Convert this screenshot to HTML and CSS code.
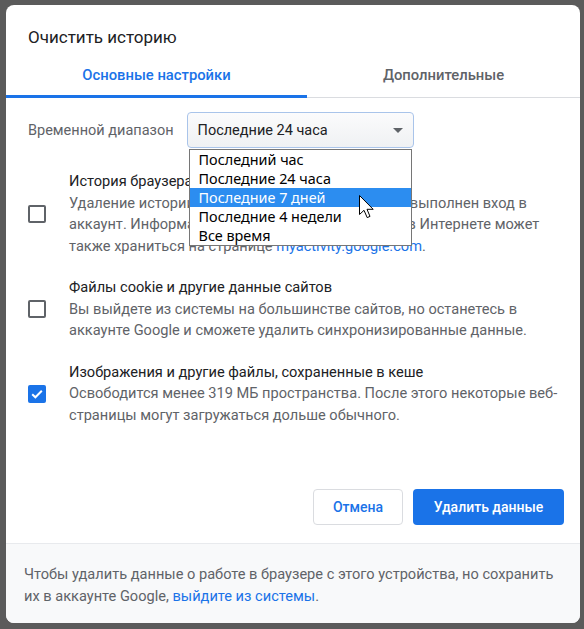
FILE: index.html
```html
<!DOCTYPE html>
<html lang="ru">
<head>
<meta charset="utf-8">
<title>Очистить историю</title>
<link rel="stylesheet" href="styles.css">
</head>
<body>
<div class="dialog">
  <div class="title">Очистить историю</div>
  <div class="tabs">
    <div class="tab active">Основные настройки</div>
    <div class="tab">Дополнительные</div>
  </div>
  <div class="body">
    <div class="range-row">
      <span class="range-label">Временной диапазон</span>
      <div class="select-wrap">
        <div class="select">Последние 24 часа<span class="arrow"></span></div>
        <ul class="dropdown">
          <li>Последний час</li>
          <li>Последние 24 часа</li>
          <li class="selected">Последние 7 дней</li>
          <li>Последние 4 недели</li>
          <li>Все время</li>
          <svg class="cursor" width="16" height="24" viewBox="0 0 16 24"><path d="M0.5 0.5 L0.5 19.5 L5 15.3 L8.2 22.6 L11 21.4 L8 14.3 L14.2 14.3 Z" fill="#fff" stroke="#000" stroke-width="1" stroke-linejoin="miter"/></svg>
        </ul>
      </div>
    </div>
    <div class="items">
      <div class="item">
        <span class="cb"></span>
        <div class="text">
          <div class="item-title">История браузера</div>
          <div class="item-desc">Удаление истории со всех устройств, на которых выполнен вход в аккаунт. Информация о других ваших действиях в Интернете может также храниться на странице <a class="link">myactivity.google.com</a>.</div>
        </div>
      </div>
      <div class="item">
        <span class="cb"></span>
        <div class="text">
          <div class="item-title">Файлы cookie и другие данные сайтов</div>
          <div class="item-desc">Вы выйдете из системы на большинстве сайтов, но останетесь в аккаунте Google и сможете удалить синхронизированные данные.</div>
        </div>
      </div>
      <div class="item">
        <span class="cb checked"><svg width="18" height="18" viewBox="0 0 18 18"><path d="M4.2 9.2 L7.4 12.3 L13.8 5.8" fill="none" stroke="#fff" stroke-width="2"/></svg></span>
        <div class="text">
          <div class="item-title">Изображения и другие файлы, сохраненные в кеше</div>
          <div class="item-desc">Освободится менее 319 МБ пространства. После этого некоторые веб-страницы могут загружаться дольше обычного.</div>
        </div>
      </div>
    </div>
    <div class="actions">
      <button class="btn btn-cancel">Отмена</button>
      <button class="btn btn-primary">Удалить данные</button>
    </div>
  </div>
  <div class="footer">Чтобы удалить данные о работе в браузере с этого устройства, но сохранить их в аккаунте Google, <a class="link">выйдите из системы</a>.</div>
</div>
</body>
</html>
```
FILE: styles.css
```css
html, body {
  margin: 0;
  padding: 0;
}
body {
  background: #5b5b5b;
  width: 584px;
  height: 629px;
  overflow: hidden;
  font-family: Roboto, "Liberation Sans", sans-serif;
}
.dialog {
  margin: 5px 0 0 6px;
  width: 574px;
  height: 618px;
  background: #fff;
  border-radius: 8px;
  display: flex;
  flex-direction: column;
  overflow: hidden;
}
.title {
  padding: 21px 22px 0;
  font-size: 17px;
  line-height: 22px;
  color: #202124;
}
.tabs {
  display: flex;
  border-bottom: 1px solid #dadce0;
}
.tab {
  height: 49px;
  box-sizing: border-box;
  padding-top: 5px;
  display: flex;
  align-items: center;
  justify-content: center;
  font-size: 14.8px;
  font-weight: 500;
  color: #5f6368;
  flex: 1;
}
.tab.active {
  flex: 0 0 301px;
  color: #1a73e8;
  border-bottom: 3px solid #1a73e8;
  margin-bottom: -1px;
  padding-top: 7px;
  height: 50px;
}
.body {
  flex: 1;
  display: flex;
  flex-direction: column;
  padding: 0 16px 0 22px;
}
.range-row {
  margin-top: 14px;
  display: flex;
  align-items: center;
  gap: 13px;
}
.range-label {
  font-size: 14.5px;
  color: #5f6368;
}
.select-wrap {
  position: relative;
}
.select {
  width: 227px;
  height: 36px;
  box-sizing: border-box;
  border: 1px solid #a9c4ea;
  border-radius: 4px;
  background: linear-gradient(#fbfbfc, #eff1f3);
  padding-left: 10px;
  display: flex;
  align-items: center;
  font-size: 14.5px;
  color: #202124;
  position: relative;
}
.arrow {
  position: absolute;
  right: 10px;
  top: 15px;
  width: 0;
  height: 0;
  border-left: 5px solid transparent;
  border-right: 5px solid transparent;
  border-top: 5px solid #5f6368;
}
.dropdown {
  position: absolute;
  top: 37px;
  left: 2px;
  width: 223px;
  box-sizing: border-box;
  margin: 0;
  padding: 0;
  list-style: none;
  background: #fff;
  border: 1px solid #767676;
  font-family: "Noto Sans", "Open Sans", sans-serif;
  font-size: 14.4px;
  color: #000;
  z-index: 5;
}
.dropdown li {
  height: 19px;
  line-height: 19px;
  padding-left: 9px;
  white-space: nowrap;
}
.dropdown li.selected {
  background: #2c8df0;
  color: #fff;
}
.cursor {
  position: absolute;
  left: 169px;
  top: 45px;
}
.items {
  margin-top: 23px;
  display: flex;
  flex-direction: column;
  gap: 20px;
}
.item {
  display: flex;
  align-items: center;
  gap: 23px;
}
.cb {
  flex: 0 0 18px;
  width: 18px;
  height: 18px;
  box-sizing: border-box;
  border: 2px solid #5f6368;
  border-radius: 2px;
  display: block;
}
.cb.checked {
  border: none;
  background: #1a73e8;
}
.cb svg {
  display: block;
}
.text {
  font-size: 14.6px;
  line-height: 21.5px;
}
.item-title {
  color: #202124;
}
.item-desc {
  color: #5f6368;
}
.link {
  color: #1a73e8;
  text-decoration: none;
}
.actions {
  margin-top: auto;
  padding-bottom: 18px;
  display: flex;
  justify-content: flex-end;
  gap: 10px;
}
.btn {
  height: 36px;
  box-sizing: border-box;
  border-radius: 4px;
  font-family: Roboto, sans-serif;
  font-size: 14px;
  font-weight: 500;
  padding: 0 18px;
}
.btn-cancel {
  width: 90px;
  background: #fff;
  border: 1px solid #dadce0;
  color: #1a73e8;
}
.btn-primary {
  width: 151px;
  background: #1a73e8;
  border: none;
  color: #fff;
}
.footer {
  height: 80px;
  box-sizing: border-box;
  border-top: 1px solid #e8eaed;
  background: #f8f9fa;
  padding: 20px 18px;
  font-size: 14.6px;
  line-height: 21.5px;
  color: #5f6368;
}
```
